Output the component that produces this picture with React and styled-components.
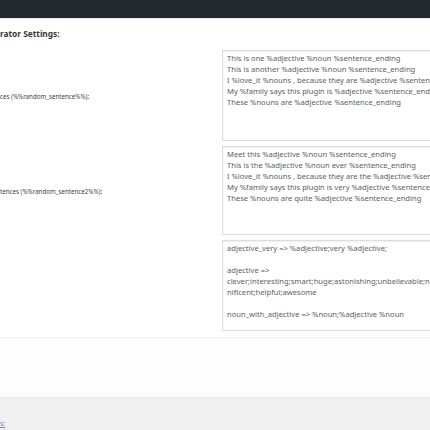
import React from 'react'
import styled, { createGlobalStyle } from 'styled-components'

const GlobalStyle = createGlobalStyle`
  html, body {
    margin: 0;
    padding: 0;
    background: #f1f1f1;
  }
  body {
    font-family: "Noto Sans", "Open Sans", sans-serif;
    color: #23282d;
  }
`

const Page = styled.div`
  width: 430px;
  height: 430px;
  overflow: hidden;
  display: flex;
  flex-direction: column;
  background: #f1f1f1;
`
const AdminBar = styled.div`
  height: 18px;
  flex-shrink: 0;
  background: #23282d;
  border-bottom: 1px solid #e2e8ee;
`
const Panel = styled.div`
  background: #fff;
  padding: 8px 0 6px 0;
  border-bottom: 1px solid #ececec;
`
const Heading = styled.h2`
  margin: 0 0 9px 0;
  font-size: 8.3px;
  font-weight: 700;
  line-height: 14px;
  color: #32373c;
`
const FormTable = styled.div`
  display: flex;
  flex-direction: column;
  gap: 5px;
`
const Row = styled.div`
  display: grid;
  grid-template-columns: 222px 300px;
  align-items: center;
`
const Label = styled.label`
  font-size: 6.2px;
  color: #3c434a;
  white-space: nowrap;
  padding-top: 1px;
`
const TextArea = styled.textarea`
  box-sizing: border-box;
  width: 300px;
  height: ${props => props.h}px;
  margin: 0;
  padding: 2px 4px;
  border: 1px solid #dddddd;
  box-shadow: inset 0 1px 2px rgba(0, 0, 0, 0.07);
  background: #fff;
  font-family: "Noto Sans", "Open Sans", sans-serif;
  font-size: 7.6px;
  line-height: 11px;
  color: #5c6166;
  resize: none;
  overflow: hidden;
  white-space: pre;
  outline: none;
`
const Spacer = styled.div`
  height: 59px;
  background: #fdfdfd;
  border-bottom: 1px solid #e8e8e8;
`
const Footer = styled.div`
  flex: 1;
  background: #f1f1f1;
  padding-top: 21px;
  font-size: 7px;
`
const FooterLink = styled.a`
  color: #6a8fb0;
  text-decoration: underline;
`

const sentences = [
  'This is one %adjective %noun %sentence_ending',
  'This is another %adjective %noun %sentence_ending',
  'I %love_it %nouns , because they are %adjective %sentence_ending',
  'My %family says this plugin is %adjective %sentence_ending',
  'These %nouns are %adjective %sentence_ending'
].join('\n')

const sentences2 = [
  'Meet this %adjective %noun %sentence_ending',
  'This is the %adjective %noun ever %sentence_ending',
  'I %love_it %nouns , because they are the %adjective %sentence_ending',
  'My %family says this plugin is very %adjective %sentence_ending',
  'These %nouns are quite %adjective %sentence_ending'
].join('\n')

const words = [
  'adjective_very => %adjective;very %adjective;',
  '',
  'adjective =>',
  'clever;interesting;smart;huge;astonishing;unbelievable;nice;mag',
  'nificent;helpful;awesome',
  '',
  'noun_with_adjective => %noun;%adjective %noun'
].join('\n')

export default function App() {
  return (
    <>
      <GlobalStyle />
      <Page>
        <AdminBar />
        <Panel>
          <Heading>rator Settings:</Heading>
          <FormTable>
            <Row>
              <Label>ces (%%random_sentence%%):</Label>
              <TextArea h={91} defaultValue={sentences} readOnly />
            </Row>
            <Row>
              <Label>tences (%%random_sentence2%%):</Label>
              <TextArea h={89} defaultValue={sentences2} readOnly />
            </Row>
            <Row>
              <Label />
              <TextArea h={91} defaultValue={words} readOnly />
            </Row>
          </FormTable>
        </Panel>
        <Spacer />
        <Footer>
          <FooterLink href="#">s:</FooterLink>
        </Footer>
      </Page>
    </>
  )
}
